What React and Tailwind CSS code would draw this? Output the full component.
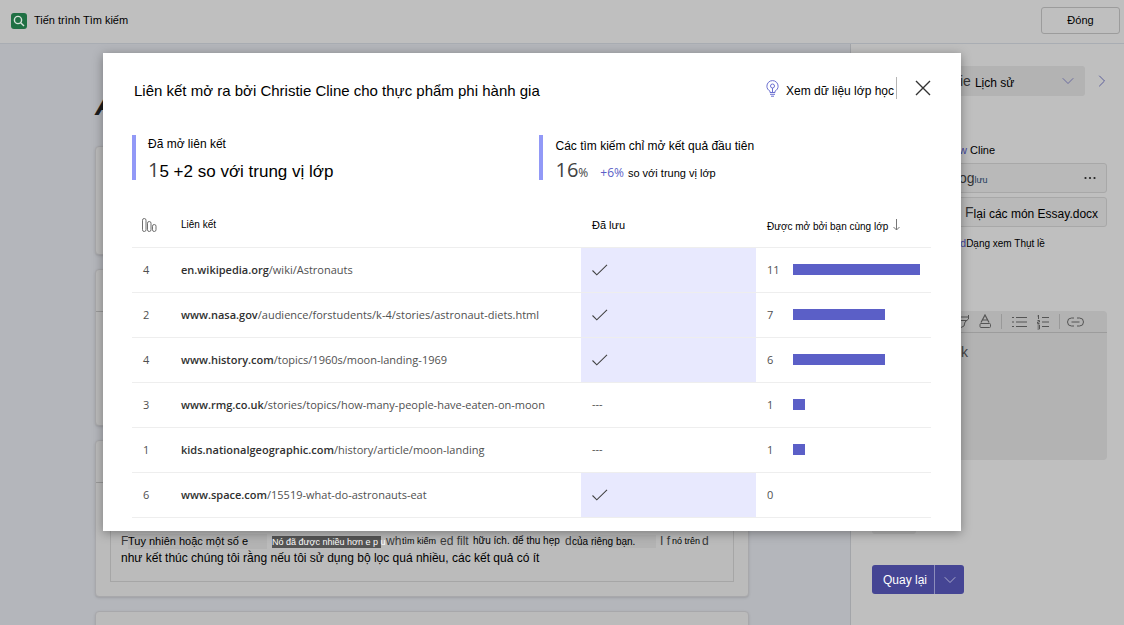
import React from 'react';
import { ChevronDown, ChevronRight } from 'lucide-react';

const links = [
  { count: 4, host: 'en.wikipedia.org', path: '/wiki/Astronauts', saved: true, peers: 11, bar: 127 },
  { count: 2, host: 'www.nasa.gov', path: '/audience/forstudents/k-4/stories/astronaut-diets.html', saved: true, peers: 7, bar: 92 },
  { count: 4, host: 'www.history.com', path: '/topics/1960s/moon-landing-1969', saved: true, peers: 6, bar: 92 },
  { count: 3, host: 'www.rmg.co.uk', path: '/stories/topics/how-many-people-have-eaten-on-moon', saved: false, peers: 1, bar: 12 },
  { count: 1, host: 'kids.nationalgeographic.com', path: '/history/article/moon-landing', saved: false, peers: 1, bar: 12 },
  { count: 6, host: 'www.space.com', path: '/15519-what-do-astronauts-eat', saved: true, peers: 0, bar: 0 },
];

const CheckIcon = () => (
  <svg width="16" height="12" viewBox="0 0 16 12" fill="none" stroke="#424242" strokeWidth="1.1">
    <path d="M0.5 6.5 L4.8 10.8 L15 0.8" />
  </svg>
);

const BulbIcon = () => (
  <svg width="13" height="17" viewBox="0 0 13 17" fill="none" stroke="#6b6fd0">
    <path d="M4 12.5 V11.2 C2 10 0.9 8.3 0.9 6.2 A5.6 5.6 0 0 1 12.1 6.2 C12.1 8.3 11 10 9 11.2 V12.5 Z" />
    <circle cx="6.5" cy="6" r="2" />
    <path d="M6.5 8 V12.5 M4 14.3 H9 M5 16.2 H8" />
  </svg>
);

const BarsIcon = () => (
  <svg width="15" height="14" viewBox="0 0 15 14" fill="none" stroke="#707070">
    <rect x="0.5" y="0.5" width="3.5" height="13" rx="1.7" />
    <rect x="5.5" y="3.5" width="3.5" height="10" rx="1.7" />
    <rect x="10.5" y="6.5" width="3.500" height="7" rx="1.7" />
  </svg>
);

const TopBar = () => (
  <header className="flex h-11 items-center border-b border-[#a9adb3] bg-[#bfbfbf] pb-0.5 pl-[11px] pr-1">
    <span className="flex h-4 w-4 items-center justify-center rounded-[3px] bg-[#1f7044]">
      <svg width="12" height="12" viewBox="0 0 12 12" fill="none" stroke="#d6e2da" strokeWidth="1.4">
        <circle cx="5" cy="5" r="3.6" />
        <path d="M7.7 7.7 L11 11" />
      </svg>
    </span>
    <h1 className="ml-[7px] text-[11px] text-black">Tiến trình Tìm kiếm</h1>
    <button className="ml-auto h-[27px] w-[79px] rounded-[3px] border border-[#9c9c9c] text-[11px] text-black">Đóng</button>
  </header>
);

const card = 'rounded-[4px] border border-[#a8a8ab] bg-[#bbbbbb] shadow-sm';

const Reflection = () => (
  <main className="min-w-0 flex-1 bg-[#b4b6bb] pl-[95px] pr-[101px] pt-[45px]">
    <h2 className="h-8 text-3xl leading-8 font-bold italic text-[#1c1c1c]">A</h2>
    <div className="mt-[25px] flex flex-col gap-[14px]">
      <section className={`${card} h-[109px]`} />
      <section className={`${card} h-[157px]`}>
        <div className="h-[42px] border-b border-[#999999]" />
      </section>
      <section className={`${card} h-[157px] px-[14px] pb-[15px]`}>
        <div className="-mx-[14px] h-[42px] border-b border-[#999999]" />
        <div className="flex h-[99px] flex-col border border-t-0 border-[#a6a6a6] px-[10px] pt-[49px] text-xs whitespace-nowrap text-black">
          <p className="flex h-[18px] items-center">
            <span className="w-[7px] text-[#3a3a3a]">F</span>
            <span className="w-[144px]"><span className="inline-block w-[139px] bg-[#b3b3b3] text-[11px]">Tuy nhiên hoặc một số e</span></span>
            <span className="w-[114px]"><mark className="inline-block w-[109px] bg-[#555555] text-[9px] leading-3 text-white">Nó đã được nhiều hơn e p u</mark></span>
            <span className="w-4 text-[#3a3a3a]">wh</span>
            <span className="w-[38px] text-[9px]">tìm kiếm</span>
            <span className="w-[33px] text-[#3a3a3a]">ed filt</span>
            <span className="w-[92px] text-[10px]">hữu ích. để thu hẹp</span>
            <span className="w-[7px] text-[#3a3a3a]">d</span>
            <span className="w-[88px]"><span className="inline-block w-[84px] bg-[#b3b3b3] text-[10px]">của riêng bạn.</span></span>
            <span className="w-[12px] text-[#3a3a3a]">I f</span>
            <span className="w-[30px] text-[9px]">nó trên</span>
            <span className="text-[#3a3a3a]">d</span>
          </p>
          <p className="text-xs leading-4">như kết thúc chúng tôi rằng nếu tôi sử dụng bộ lọc quá nhiều, các kết quả có ít</p>
        </div>
      </section>
      <section className={`${card} h-[60px]`} />
    </div>
  </main>
);

const EditorToolbar = () => (
  <svg width="127" height="16" viewBox="0 0 127 16" fill="none" stroke="#555555">
    <path d="M0 3 H8 M0 6.5 H7 M8.5 1 V5 L5 8 L4 12 L0 14" />
    <path d="M21 8.5 L25 1 L29 8.5 M22.5 6 H27.5" strokeWidth="1.2" />
    <rect x="20" y="9.5" width="10.5" height="4" rx="1" />
    <path d="M41.5 0 V15" stroke="#999999" />
    <path d="M52 3.5 H54 M52 8 H54 M52 12.5 H54 M56 3.5 H67 M56 8 H67 M56 12.5 H67" />
    <path d="M78.5 1 V5 M77.5 2 H78.5 M77.5 6.5 H79.5 V8 H77.5 V9.5 H79.5 M77.5 11 H79.5 V15 H77.5 M77.5 13 H79.5 M82 3.5 H89 M82 8 H89 M82 12.5 H89" />
    <path d="M99.5 0 V15" stroke="#999999" />
    <path d="M114 4 H111.500 A4 4 0 0 0 111.5 12 H114 M117 4 H119.5 A4 4 0 0 1 119.5 12 H117 M111.5 8 H119.5" />
  </svg>
);

const Sidebar = () => (
  <aside className="w-[274px] shrink-0 border-l border-[#a3a5a9] bg-[#bfbfbf] pl-[21px] pr-[17px] pt-[22px] text-xs text-black">
    <div className="flex items-center">
      <button className="flex h-[30px] w-[213px] shrink-0 items-center rounded-[3px] bg-[#b3b3b3] pl-[88px] text-left">
        <span className="text-sm text-[#333333]">ie</span>
        <span className="ml-1 pt-1">Lịch sử</span>
        <ChevronDown size={20} strokeWidth={1} className="ml-auto mr-[7px] text-[#5b5d9b]" />
      </button>
      <button aria-label="Tiếp" className="ml-[7px] shrink-0">
        <ChevronRight size={20} strokeWidth={1.2} className="text-[#5b5d9b]" />
      </button>
    </div>
    <p className="mt-[45px] h-[18px] pl-[87px] text-[11px] leading-[18px]">
      <span className="text-[#44469a]">w</span> Cline
    </p>
    <div className="mt-1 flex h-[30px] items-center rounded-[3px] border border-[#a8a8a8] bg-[#b9b9b9] pl-[86px]">
      <span className="text-sm text-[#333333]">og</span>
      <span className="pt-1 text-[9px] text-[#1d3a5c]">lưu</span>
      <button aria-label="Thêm" className="ml-auto mr-[10px]">
        <svg width="12" height="4" viewBox="0 0 12 4" fill="#222222">
          <circle cx="1.5" cy="2" r="1.1" /><circle cx="6" cy="2" r="1.1" /><circle cx="10.5" cy="2" r="1.1" />
        </svg>
      </button>
    </div>
    <div className="mt-1 flex h-[30px] items-center rounded-[3px] border border-[#a8a8a8] bg-[#b9b9b9] pl-[92px] whitespace-nowrap">
      <span className="text-sm text-[#333333]">F</span>
      <span className="pt-1">lại các món Essay.docx</span>
    </div>
    <p className="mt-[7px] h-[18px] pl-[88px] text-[11px] leading-[18px]">
      <span className="text-[#44469a]">d</span><span className="text-[10px]">Dạng xem Thụt lề</span>
    </p>
    <div className="mt-[59px] h-[149px] rounded-[4px] bg-[#b3b3b3]">
      <div className="flex h-[22px] items-center border-b border-[#9c9c9c] pl-[88px]">
        <EditorToolbar />
      </div>
      <p className="pl-[89px] pt-[9px] text-sm text-[#444444]">k</p>
    </div>
    <div className="mt-[44px] h-[30px] w-11 rounded-[3px] bg-[#b3b3b3]" />
    <div className="mt-[31px] flex h-[29px] w-[92px] overflow-hidden rounded-[3px] bg-[#454594] text-white">
      <button className="w-[63px] border-r border-[#8c8dbb] pl-1">Quay lại</button>
      <button aria-label="Tùy chọn" className="flex flex-1 items-center justify-center">
        <ChevronDown size={20} strokeWidth={1} className="text-[#bdbdd6]" />
      </button>
    </div>
  </aside>
);

const LinksTable = () => (
  <table className="mt-[23px] w-full table-fixed text-left text-[#505050]">
    <thead className="h-[44px] border-b border-[#eeeeee] text-[10px] text-black">
      <tr>
        <th className="w-[49px] pl-[10px] font-normal"><BarsIcon /></th>
        <th className="font-normal">Liên kết</th>
        <th className="w-[175px] pl-[11px] text-[11px] font-normal">Đã lưu</th>
        <th className="w-[175px] pl-[11px] font-normal whitespace-nowrap">
          <span className="flex items-center gap-[5px]">
            <span className="pt-1">Được mở bởi bạn cùng lớp</span>
            <svg width="7" height="12" viewBox="0 0 7 12" fill="none" stroke="#777777">
              <path d="M3.5 0 V11 M0.5 8 L3.5 11 L6.5 8" />
            </svg>
          </span>
        </th>
      </tr>
    </thead>
    <tbody className="font-['Open_Sans',sans-serif] text-[11px]">
      {links.map((link) => (
        <tr key={link.host} className="h-[45px] border-b border-[#eeeeee]">
          <td className="pl-[11px] pt-0.5">{link.count}</td>
          <td className="pt-0.5 whitespace-nowrap">
            <a href="#" className="text-[#505050]"><b className="font-semibold text-[#303030]">{link.host}</b>{link.path}</a>
          </td>
          <td className={link.saved ? 'bg-[#e8e9fe] pl-[11px]' : 'pl-[11px]'}>
            {link.saved ? <CheckIcon /> : '---'}
          </td>
          <td className="pl-[11px]">
            <div className="flex items-center">
              <span className="w-[26px] pt-0.5">{link.peers}</span>
              <span className="h-[11px] bg-[#5b5fc7]" style={{ width: link.bar }} />
            </div>
          </td>
        </tr>
      ))}
    </tbody>
  </table>
);

const LinksDialog = () => (
  <div role="dialog" aria-labelledby="dialog-title" className="bg-white pr-[30px] pl-[29px] pt-6 pb-[13px] shadow-[0_2px_10px_rgba(0,0,0,0.35)]">
    <div className="flex h-[29px] items-center text-black">
      <h2 id="dialog-title" className="pl-0.5 text-[15px]">Liên kết mở ra bởi Christie Cline cho thực phẩm phi hành gia</h2>
      <button className="ml-auto flex h-[22px] items-center gap-[7px] self-start border-r border-[#b5b5b5] pr-[2px] text-xs">
        <BulbIcon />
        <span className="pt-1.5">Xem dữ liệu lớp học</span>
      </button>
      <button aria-label="Đóng hộp thoại" className="ml-[18px] flex h-[22px] items-center self-start">
        <svg width="16" height="16" viewBox="0 0 16 16" stroke="#333333" strokeWidth="1.4">
          <path d="M1 1 L15 15 M15 1 L1 15" />
        </svg>
      </button>
    </div>
    <div className="mt-[29px] grid grid-cols-[51%_49%] text-black">
      <div className="h-[45px] border-l-4 border-[#9299f7] pl-3">
        <p className="text-xs leading-[18px]">Đã mở liên kết</p>
        <p className="flex items-baseline text-[17px] leading-[34px]">
          <span className="font-['Open_Sans',sans-serif] text-xl leading-[34px] text-[#424242]">1</span>5 +2 so với trung vị lớp
        </p>
      </div>
      <div className="h-[45px] border-l-4 border-[#9299f7] pl-3">
        <p className="text-xs leading-[22px]">Các tìm kiếm chỉ mở kết quả đầu tiên</p>
        <p className="flex items-baseline font-['Open_Sans',sans-serif] text-[#424242]">
          <span className="text-xl leading-[26px]">16</span>
          <span className="text-xs">%</span>
          <span className="ml-3 text-xs text-[#5b5fc7]">+6%</span>
          <span className="ml-1 font-['Liberation_Sans',sans-serif] text-[11px] text-black">so với trung vị lớp</span>
        </p>
      </div>
    </div>
    <LinksTable />
  </div>
);

const App = () => {
  return (
    <div className="relative flex h-screen flex-col overflow-hidden font-['Liberation_Sans',Arial,sans-serif]">
      <TopBar />
      <div className="flex min-h-0 flex-1">
        <Reflection />
        <Sidebar />
      </div>
      {/* links dialog sits over the dimmed page */}
      <div className="absolute inset-x-0 top-0 pl-[103px] pr-[163px] pt-[53px]">
        <LinksDialog />
      </div>
    </div>
  );
};

export default App;
